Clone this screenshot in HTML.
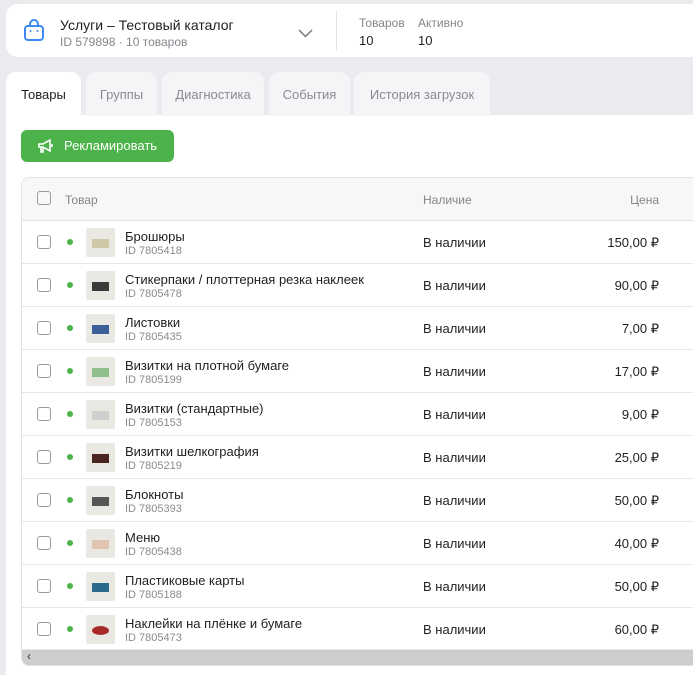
<!DOCTYPE html>
<html><head><meta charset="utf-8"><style>
*{box-sizing:border-box;margin:0;padding:0}
body{width:693px;height:671px;overflow:hidden;background:#ebebef;font-family:"Liberation Sans",sans-serif;position:relative;color:#1f1f1f}
.hdr{position:absolute;left:6px;top:4px;width:700px;height:53px;background:#fff;border-radius:12px}
.t{position:absolute;white-space:nowrap}
.tab{position:absolute;top:72px;height:44px;background:#f5f5f7;border-radius:10px 10px 0 0;font-size:13px;color:#8a8a90;text-align:center;line-height:46px}
.panel{position:absolute;left:6px;top:115px;width:700px;height:560px;background:#fff}
.btn{position:absolute;left:21px;top:130px;width:153px;height:32px;background:#4cb34a;border-radius:6px;color:#fff;font-size:13px}
.tbl{position:absolute;left:21px;top:177px;width:690px;height:489px;border:1px solid #e2e2e6;border-radius:8px;overflow:hidden}
.th{position:absolute;left:0;top:0;width:100%;height:43px;background:#f7f7f8;border-bottom:1px solid #e2e2e6;font-size:12px;color:#85858c}
.row{position:absolute;left:0;width:100%;height:43px;border-bottom:1px solid #e6e6e9;font-size:13px}
.cb{position:absolute;left:15px;width:14px;height:14px;border:1.5px solid #9a9aa2;border-radius:3px}
.dot{position:absolute;left:45px;top:18px;width:6px;height:6px;border-radius:50%;background:#4cb34a}
.img{position:absolute;left:64px;top:7px;width:29px;height:29px;background:#e9e8e2;border-radius:2px}
.img i{position:absolute;left:6px;top:11px;width:17px;height:9px}
.nm{position:absolute;left:103px;top:8px}
.id{position:absolute;left:103px;top:24px;font-size:11px;color:#8a8a90}
.av{position:absolute;left:401px;top:14px}
.pr{position:absolute;right:51px;top:14px}
.sb{position:absolute;left:0;bottom:0;width:100%;height:16px;background:#cdcdcd;border-top:1px solid #e6e6e9}
</style></head><body>
<div class="hdr">
<svg style="position:absolute;left:17px;top:14px" width="22" height="24" viewBox="0 0 22 24" fill="none" stroke="#3d8af7" stroke-width="2"><rect x="2" y="8" width="18" height="14" rx="3"/><path d="M7 8V6a4 4 0 0 1 8 0v2"/><path d="M7.5 13h0M14.5 13h0" stroke-linecap="round"/></svg>
<div class="t" style="left:54px;top:13px;font-size:14px">Услуги – Тестовый каталог</div>
<div class="t" style="left:54px;top:31px;font-size:12px;color:#85858c">ID 579898 · 10 товаров</div>
<svg style="position:absolute;left:292px;top:25px" width="15" height="9" viewBox="0 0 15 9"><path d="M1 1l6.5 6.5L14 1" stroke="#85858c" stroke-width="1.6" fill="none"/></svg>
<div style="position:absolute;left:330px;top:7px;width:1px;height:40px;background:#e2e2e6"></div>
<div class="t" style="left:353px;top:12px;font-size:12px;color:#85858c">Товаров</div>
<div class="t" style="left:353px;top:29px;font-size:13px">10</div>
<div class="t" style="left:412px;top:12px;font-size:12px;color:#85858c">Активно</div>
<div class="t" style="left:412px;top:29px;font-size:13px">10</div>
</div>
<div class="panel"></div>
<div class="tab" style="left:6px;width:75px;background:#fff;color:#1f1f1f">Товары</div>
<div class="tab" style="left:86px;width:71px">Группы</div>
<div class="tab" style="left:162px;width:102px">Диагностика</div>
<div class="tab" style="left:269px;width:81px">События</div>
<div class="tab" style="left:354px;width:136px">История загрузок</div>
<div class="btn">
<svg style="position:absolute;left:16px;top:9px" width="18" height="15" viewBox="0 0 18 15" fill="none" stroke="#fff" stroke-width="1.6"><path d="M2 5h4l7-4v11l-7-4H2z"/><path d="M4 8v5h2V8"/><path d="M15 5v3"/></svg>
<div class="t" style="left:43px;top:8px">Рекламировать</div></div>
<div class="tbl">
<div class="th"><div class="cb" style="top:13px"></div><div class="t" style="left:43px;top:15px">Товар</div><div class="t" style="left:401px;top:15px">Наличие</div><div class="t" style="right:51px;top:15px">Цена</div></div>
<div class="row" style="top:43px"><div class="cb" style="top:14px"></div><div class="dot"></div><div class="img"><i style="background:#cfc7a8"></i></div><div class="nm">Брошюры</div><div class="id">ID 7805418</div><div class="av">В наличии</div><div class="pr">150,00 ₽</div></div>
<div class="row" style="top:86px"><div class="cb" style="top:14px"></div><div class="dot"></div><div class="img"><i style="background:#3a3a3a"></i></div><div class="nm">Стикерпаки / плоттерная резка наклеек</div><div class="id">ID 7805478</div><div class="av">В наличии</div><div class="pr">90,00 ₽</div></div>
<div class="row" style="top:129px"><div class="cb" style="top:14px"></div><div class="dot"></div><div class="img"><i style="background:#3c5f9a"></i></div><div class="nm">Листовки</div><div class="id">ID 7805435</div><div class="av">В наличии</div><div class="pr">7,00 ₽</div></div>
<div class="row" style="top:172px"><div class="cb" style="top:14px"></div><div class="dot"></div><div class="img"><i style="background:#8fbf8a"></i></div><div class="nm">Визитки на плотной бумаге</div><div class="id">ID 7805199</div><div class="av">В наличии</div><div class="pr">17,00 ₽</div></div>
<div class="row" style="top:215px"><div class="cb" style="top:14px"></div><div class="dot"></div><div class="img"><i style="background:#cfcfcf"></i></div><div class="nm">Визитки (стандартные)</div><div class="id">ID 7805153</div><div class="av">В наличии</div><div class="pr">9,00 ₽</div></div>
<div class="row" style="top:258px"><div class="cb" style="top:14px"></div><div class="dot"></div><div class="img"><i style="background:#4a2520"></i></div><div class="nm">Визитки шелкография</div><div class="id">ID 7805219</div><div class="av">В наличии</div><div class="pr">25,00 ₽</div></div>
<div class="row" style="top:301px"><div class="cb" style="top:14px"></div><div class="dot"></div><div class="img"><i style="background:#555"></i></div><div class="nm">Блокноты</div><div class="id">ID 7805393</div><div class="av">В наличии</div><div class="pr">50,00 ₽</div></div>
<div class="row" style="top:344px"><div class="cb" style="top:14px"></div><div class="dot"></div><div class="img"><i style="background:#e0c6b0"></i></div><div class="nm">Меню</div><div class="id">ID 7805438</div><div class="av">В наличии</div><div class="pr">40,00 ₽</div></div>
<div class="row" style="top:387px"><div class="cb" style="top:14px"></div><div class="dot"></div><div class="img"><i style="background:#2a6a8a"></i></div><div class="nm">Пластиковые карты</div><div class="id">ID 7805188</div><div class="av">В наличии</div><div class="pr">50,00 ₽</div></div>
<div class="row" style="top:430px"><div class="cb" style="top:14px"></div><div class="dot"></div><div class="img"><i style="background:#a82a2a;border-radius:50%"></i></div><div class="nm">Наклейки на плёнке и бумаге</div><div class="id">ID 7805473</div><div class="av">В наличии</div><div class="pr">60,00 ₽</div></div>
<div class="sb"><div class="t" style="left:5px;top:-1px;font-size:12px;color:#333">‹</div></div>
</div>
</body></html>
